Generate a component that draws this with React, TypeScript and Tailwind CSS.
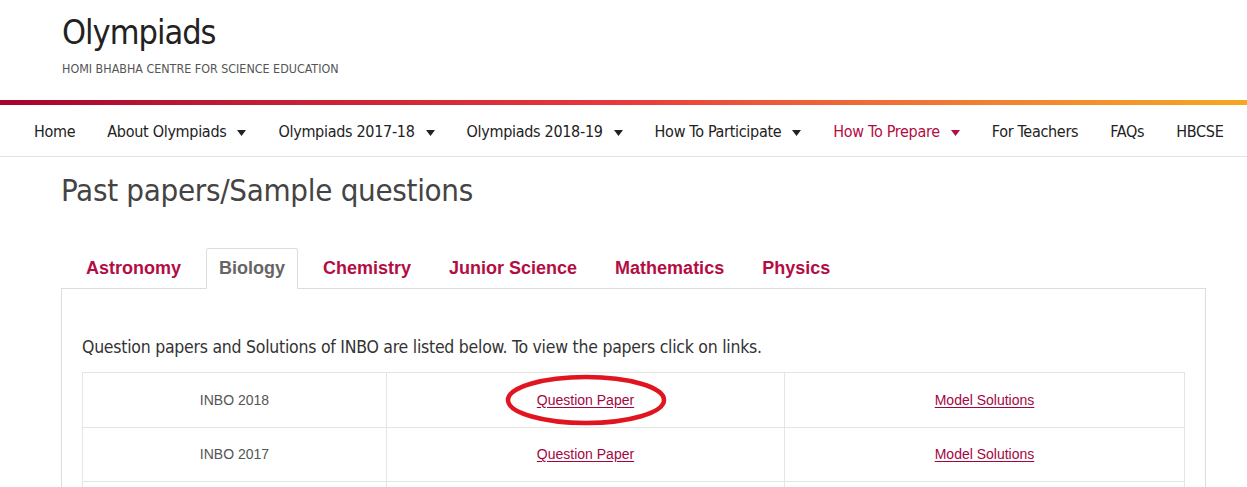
import React from 'react';

const dosis = "font-['DejaVu_Sans_Condensed','DejaVu_Sans',sans-serif]";
const arial = "font-['Liberation_Sans',Arial,sans-serif]";

const Caret = () => (
  <svg width="9" height="6" viewBox="0 0 9 6" className="ml-[11px] mt-[2px]">
    <path d="M0 0 H9 L4.5 6 Z" fill="currentColor" />
  </svg>
);

const navItems = [
  { label: 'Home' },
  { label: 'About Olympiads', caret: true },
  { label: 'Olympiads 2017-18', caret: true },
  { label: 'Olympiads 2018-19', caret: true },
  { label: 'How To Participate', caret: true },
  { label: 'How To Prepare', caret: true, active: true },
  { label: 'For Teachers' },
  { label: 'FAQs' },
  { label: 'HBCSE' },
];

const tabs = ['Astronomy', 'Biology', 'Chemistry', 'Junior Science', 'Mathematics', 'Physics'];

const rows = ['INBO 2018', 'INBO 2017', 'INBO 2016', 'INBO 2015'];

export default function App() {
  return (
    <div className="bg-white min-h-screen text-[#333]">
      {/* Site header */}
      <header className="pl-[62px] pt-[11px] h-[100px]">
        <h1 className={`${dosis} text-[34px] leading-[42px] tracking-[-1px] text-[#222]`}>
          Olympiads
        </h1>
        <p className={`${dosis} text-[12.4px] leading-[16px] text-[#555] mt-[8px]`}>
          HOMI BHABHA CENTRE FOR SCIENCE EDUCATION
        </p>
      </header>

      <div className="h-[5px] bg-linear-to-r from-[#a8002f] via-[#e8383c] to-[#f5a820]" />

      {/* Main navigation */}
      <nav className="h-[52px] border-b border-[#e3e3e3] flex items-center pl-[34px] pt-[3px] gap-[32px]">
        {navItems.map((item) => (
          <a
            key={item.label}
            href="#"
            className={`${dosis} flex items-center text-[16px] tracking-[-0.3px] ${
              item.active ? 'text-[#b30d43]' : 'text-[#222]'
            }`}
          >
            {item.label}
            {item.caret && <Caret />}
          </a>
        ))}
      </nav>

      <h2 className={`${dosis} pl-[61px] pt-[13px] text-[31px] leading-[40px] tracking-[-0.3px] text-[#444]`}>
        Past papers/Sample questions
      </h2>

      {/* Tabs */}
      <div className="mr-[41px] ml-[61px] mt-[38px]">
        <ul className="flex pl-[12px] gap-[12px]">
          {tabs.map((t) => {
            const active = t === 'Biology';
            return (
              <li
                key={t}
                className={`${arial} h-[41px] px-[12px] flex items-center text-[18px] font-bold -mb-px ${
                  active
                    ? 'text-[#666] border border-[#ddd] border-b-white bg-white rounded-t-[3px] relative z-10'
                    : 'text-[#b30d43] border border-transparent'
                }`}
              >
                {t}
              </li>
            );
          })}
        </ul>

        <div className="border border-[#ddd] px-[20px] pt-[46px] pb-[20px]">
          <p className={`${dosis} text-[17.5px] leading-[24px] tracking-[-0.25px] text-[#333] mb-[13px]`}>
            Question papers and Solutions of INBO are listed below. To view the papers click on links.
          </p>

          <div className="border border-[#e5e5e5]">
            {rows.map((r, i) => (
              <div
                key={r}
                className={`grid grid-cols-[303px_398px_1fr] h-[54px] ${arial} text-[14px] ${
                  i > 0 ? 'border-t border-[#e5e5e5]' : ''
                }`}
              >
                <div className="flex items-center justify-center text-[#555]">{r}</div>
                <div className="flex items-center justify-center border-l border-[#e5e5e5] relative">
                  <a href="#" className="text-[#a3063f] underline underline-offset-2">
                    Question Paper
                  </a>
                  {i === 0 && (
                    <svg
                      width="164"
                      height="52"
                      viewBox="0 0 164 52"
                      className="absolute left-1/2 top-1/2 -translate-x-1/2 -translate-y-1/2 pointer-events-none"
                    >
                      <ellipse cx="82" cy="26" rx="78" ry="23" fill="none" stroke="#e0151f" strokeWidth="4.5" />
                    </svg>
                  )}
                </div>
                <div className="flex items-center justify-center border-l border-[#e5e5e5]">
                  <a href="#" className="text-[#a3063f] underline underline-offset-2">
                    Model Solutions
                  </a>
                </div>
              </div>
            ))}
          </div>
        </div>
      </div>
    </div>
  );
}
